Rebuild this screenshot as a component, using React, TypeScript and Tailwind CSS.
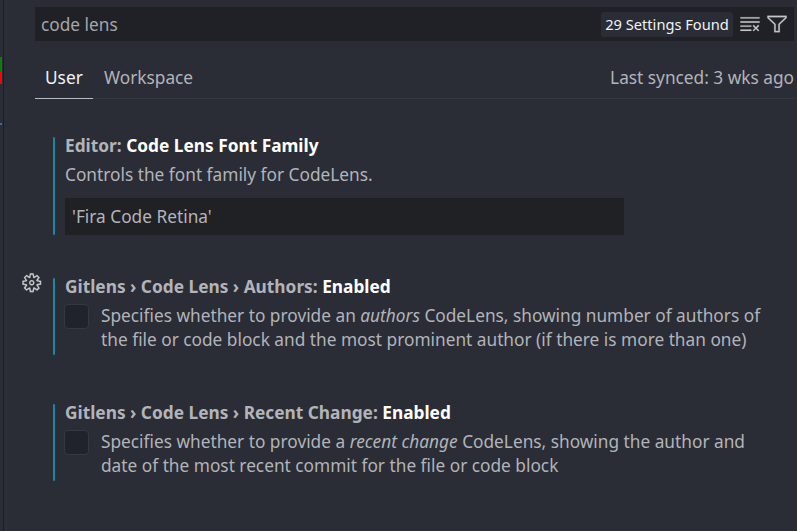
import type { ReactNode } from "react";
import { VscClearAll, VscFilter, VscGear } from "react-icons/vsc";

function Title({ category, label }: { category: string; label: string }) {
  return (
    <h3 className="h-6 whitespace-nowrap text-[17.3px] leading-6 font-bold text-[#b2b4ba]">
      {category} <span className="text-white">{label}</span>
    </h3>
  );
}

function Setting({ gear, className, children }: { gear?: boolean; className: string; children: ReactNode }) {
  return (
    <section className={`flex ${className}`}>
      <div className="w-[49px] shrink-0 pl-[17px]">
        {gear && <VscGear className="-mt-[6px] size-[21.5px] stroke-[#c5c7cb] stroke-[0.1] text-[#c5c7cb]" />}
      </div>
      <div className="w-[2px] shrink-0 rounded-sm bg-[#1b87a0]" />
      <div className="min-w-0 flex-1 pl-[10px]">{children}</div>
    </section>
  );
}

function CheckboxSetting({ lines }: { lines: ReactNode[] }) {
  return (
    <div className="mt-[5px] flex">
      <div className="-ml-px size-[25px] shrink-0 rounded-[4px] border border-[#353840] bg-[#20232c]" />
      <div className="ml-3">
        {lines.map((line, i) => (
          <p key={i} className="h-6 whitespace-nowrap">{line}</p>
        ))}
      </div>
    </div>
  );
}

export default function App() {
  return (
    <div className="flex h-[531px] w-[797px] overflow-hidden bg-[#2a2d35] font-['Noto_Sans',sans-serif] text-[17.27px] leading-6 text-[#b2b4ba]">
      <div className="flex w-[2px] shrink-0 flex-col bg-[#2a2d35]">
        <div className="mt-[57px] h-[14px] bg-[#098009]" />
        <div className="h-[13px] bg-[#f80404]" />
        <div className="mt-[39px] h-[2px] bg-[#4265b0]" />
      </div>
      <div className="ml-px w-px shrink-0 bg-[#1c1e25]" />
      <main className="flex w-[793px] shrink-0 flex-col">
        <header className="ml-[31px] w-[759px] pt-[7px]">
          <div className="flex h-[34px] items-center bg-[#202126] pl-[6px] text-[#a5a6aa]">
            <span className="flex-1 pt-[2px]">code lens</span>
            <span className="mt-px flex h-[25px] w-[132px] items-center justify-center rounded-[3px] bg-[#2a2d35] pb-px text-[14.65px] whitespace-nowrap text-[#f2f2f4]">
              29 Settings Found
            </span>
            <VscClearAll className="ml-[6px] size-[22px] stroke-[#c5c7cb] stroke-[0.1] text-[#c5c7cb]" />
            <VscFilter className="mr-[6px] ml-[5px] size-[22px] stroke-[#c5c7cb] stroke-[0.2] text-[#c5c7cb]" />
          </div>
          <div className="mt-[14px] flex h-[44px] border-b border-[#363942]">
            <div className="h-[44px] w-[58px] border-b border-[#b7bbc5] pt-[11px] pl-[10px] text-[#f0f1f4]">User</div>
            <div className="pt-[11px] pl-[11px]">Workspace</div>
            <div className="ml-auto pt-[11px] whitespace-nowrap">Last synced: 3 wks ago</div>
          </div>
        </header>

        <Setting className="mt-[38px] h-[98px]">
          <div className="-mt-[3px]">
            <Title category="Editor:" label="Code Lens Font Family" />
            <p className="mt-[5px] h-6 whitespace-nowrap">Controls the font family for CodeLens.</p>
            <div className="mt-[11px] flex h-[37px] w-[559px] items-center bg-[#202125] pt-px pl-[7px]">'Fira Code Retina'</div>
          </div>
        </Setting>

        <Setting gear className="mt-[43px] h-[77px]">
          <div className="-mt-[3px]">
            <Title category="Gitlens › Code Lens › Authors:" label="Enabled" />
            <CheckboxSetting
              lines={[
                <>Specifies whether to provide an <em>authors</em> CodeLens, showing number of authors of</>,
                "the file or code block and the most prominent author (if there is more than one)",
              ]}
            />
          </div>
        </Setting>

        <Setting className="mt-[49px] h-[77px]">
          <div className="-mt-[3px]">
            <Title category="Gitlens › Code Lens › Recent Change:" label="Enabled" />
            <CheckboxSetting
              lines={[
                <>Specifies whether to provide a <em>recent change</em> CodeLens, showing the author and</>,
                "date of the most recent commit for the file or code block",
              ]}
            />
          </div>
        </Setting>
      </main>
    </div>
  );
}
